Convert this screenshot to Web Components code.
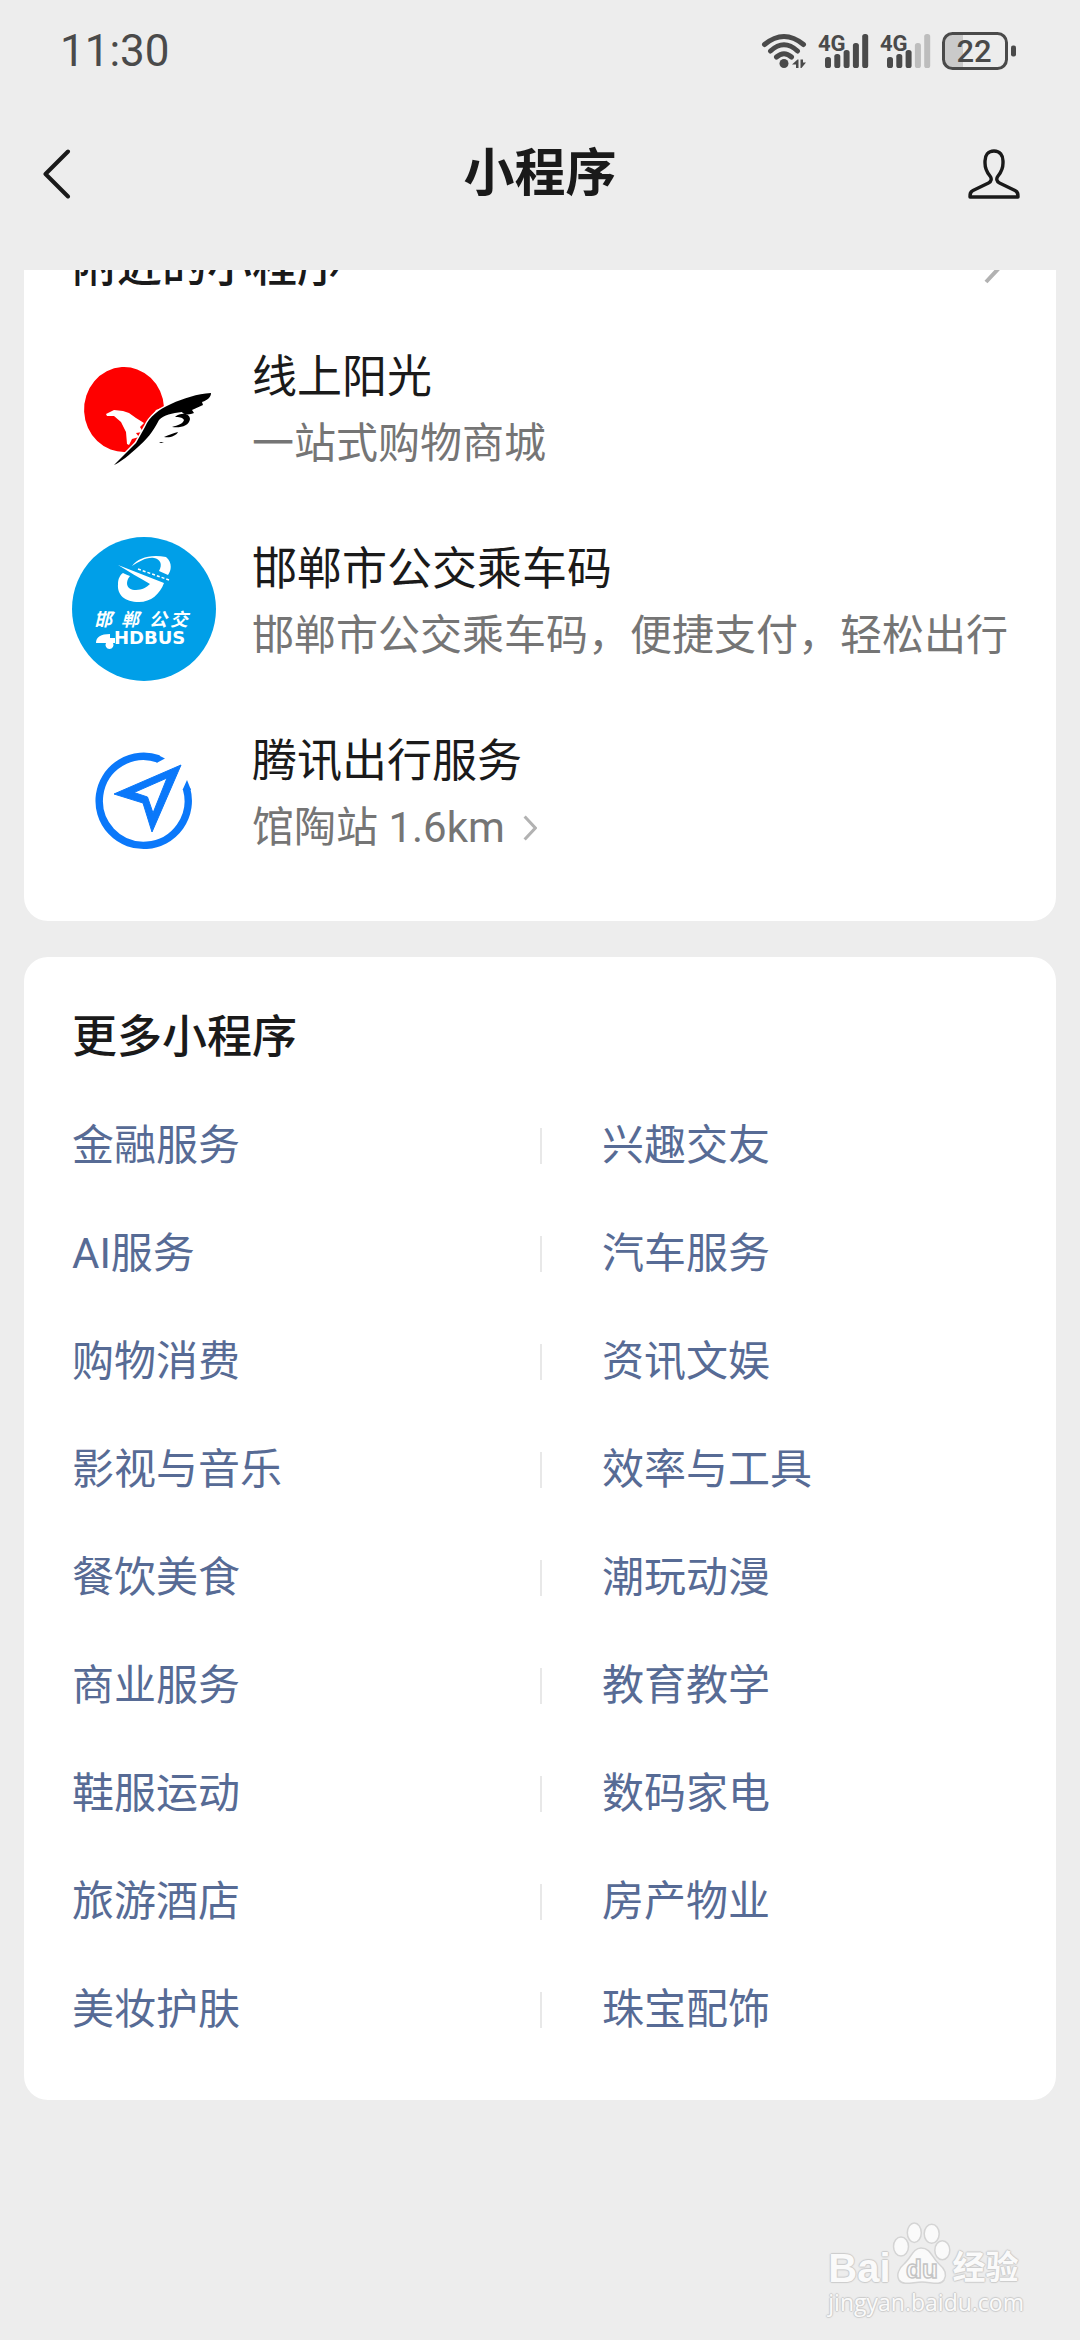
<!DOCTYPE html>
<html lang="zh-CN">
<head>
<meta charset="utf-8">
<meta name="viewport" content="width=device-width, initial-scale=1">
<title>小程序</title>
<style>
    body {
        margin: 0;
        background: #ededed;
        color: #1a1a1a;
        font-family: Roboto, "Noto Sans CJK SC", sans-serif;
    }
</style>
</head>
<body>
<mini-page>
    <status-bar slot="top"></status-bar>
    <nav-bar slot="top">小程序</nav-bar>

    <card-box class="nearby" arrow>
        <span slot="title">附近的小程序</span>
        <app-row logo="bird">线上阳光<span slot="desc">一站式购物商城</span></app-row>
        <app-row logo="bus">邯郸市公交乘车码<span slot="desc">邯郸市公交乘车码，便捷支付，轻松出行</span></app-row>
        <app-row logo="travel" arrow>腾讯出行服务<span slot="desc">馆陶站 1.6km</span></app-row>
    </card-box>

    <card-box>
        <span slot="title">更多小程序</span>
        <link-grid items="金融服务,兴趣交友,AI服务,汽车服务,购物消费,资讯文娱,影视与音乐,效率与工具,餐饮美食,潮玩动漫,商业服务,教育教学,鞋服运动,数码家电,旅游酒店,房产物业,美妆护肤,珠宝配饰"></link-grid>
    </card-box>

    <water-mark slot="overlay"></water-mark>
</mini-page>

<script>
// every element gets an open shadow root with its own markup
class BaseElement extends HTMLElement {
    constructor() {
        super()
        const template = document.createElement("template")
        template.innerHTML = this.render()
        const shadow = this.attachShadow({ mode: "open" })
        shadow.append(template.content.cloneNode(true))
    }
}

class MiniPage extends BaseElement {
    render() {
        return `
<style>
    :host {
        display: flex;
        flex-direction: column;
        position: relative;
        min-height: 100vh;
    }
    main {
        flex: 1;
        display: flex;
        flex-direction: column;
        gap: 36px;
        padding: 0 24px 36px;
        overflow: hidden;
    }
    /* the list is scrolled a little, so the first heading is cut off */
    ::slotted(.nearby) {
        margin-top: -84px;
    }
</style>
<header><slot name="top"></slot></header>
<main><slot></slot></main>
<slot name="overlay"></slot>`
    }
}
customElements.define("mini-page", MiniPage)


// 4G bars, the number says how many of the five are lit
function signal(lit) {
    const heights = [11, 14, 18, 25, 34]
    const bars = heights.map((h, i) =>
        `<rect x="${7 + i * 9.3}" y="${34 - h}" width="6" height="${h}" rx="2.6" fill="${i < lit ? "#4a4a4a" : "#bdbdbd"}"/>`
    ).join("")
    return `<svg width="50" height="34" viewBox="0 0 50 34">${bars}
        <text x="0" y="17" font-size="22" font-weight="700" fill="#4a4a4a">4G</text></svg>`
}

class StatusBar extends BaseElement {
    render() {
        return `
<style>
    :host {
        display: flex;
        align-items: center;
        justify-content: space-between;
        height: 102px;
        padding: 0 64px 0 60px;
        color: #4a4a4a;
    }
    time {
        font-size: 44px;
        line-height: 60px;
    }
    .icons {
        display: flex;
        align-items: center;
        gap: 12px;
    }
    svg {
        display: block;
        overflow: visible;
    }
</style>
<time>11:30</time>
<div class="icons">
    <svg width="44" height="34" viewBox="0 0 44 34" fill="none" stroke="#4a4a4a" stroke-width="5" stroke-linecap="round">
        <path d="M2.5 10.5Q22-5.5 41.5 10.5M8.5 17Q22 4.5 35.5 17M14.5 23Q22 16.5 29.5 23"/>
        <circle cx="22" cy="29.5" r="4.5" fill="#4a4a4a" stroke="none"/>
        <path d="M30 30.5L35.5 25.5H36.5V34H34V30.5ZM38.5 25.5H41V28.5H44L39.5 34H38.5Z" fill="#4a4a4a" stroke="none"/>
    </svg>
    ${signal(5)}
    ${signal(3)}
    <svg width="74" height="38" viewBox="0 0 74 38">
        <path d="M11 2H21V36H11A9 9 0 0 1 2 27V11A9 9 0 0 1 11 2Z" fill="#cacaca"/>
        <rect x="1.5" y="1.5" width="63" height="35" rx="9" fill="none" stroke="#4a4a4a" stroke-width="3"/>
        <rect x="69" y="13.5" width="5" height="11" rx="2" fill="#4a4a4a"/>
        <text x="32" y="30" font-size="31" font-weight="500" text-anchor="middle" fill="#4a4a4a">22</text>
    </svg>
</div>`
    }
}
customElements.define("status-bar", StatusBar)


class NavBar extends BaseElement {
    render() {
        return `
<style>
    :host {
        display: flex;
        align-items: flex-start;
        justify-content: space-between;
        height: 132px;
        padding: 36px 60px 0 42px;
    }
    h1 {
        margin: 0;
        font-size: 51px;
        line-height: 72px;
        font-weight: 700;
    }
    button {
        display: flex;
        align-items: center;
        width: 72px;
        height: 72px;
        padding: 0;
        border: 0;
        background: none;
    }
    .me {
        width: 54px;
        justify-content: flex-end;
    }
</style>
<button class="back" aria-label="返回">
    <svg width="30" height="50" viewBox="0 0 30 50" fill="none" stroke="#1a1a1a" stroke-width="4" stroke-linecap="round" stroke-linejoin="round"><path d="M26 2.5L3.5 25L26 47.5"/></svg>
</button>
<h1><slot></slot></h1>
<button class="me" aria-label="我的">
    <svg width="52" height="50" viewBox="0 0 52 50" fill="none" stroke="#1a1a1a" stroke-width="3.4" stroke-linejoin="round"><path d="M26 2C20 2 17 6.5 17 12V14C17 21 20 24.5 22 27C24 29.5 23.5 32.5 20.5 34L5 41.5C2 43 2 45 2 48H50C50 45 50 43 47 41.5L31.5 34C28.5 32.5 28 29.5 30 27C32 24.5 35 21 35 14V12C35 6.5 32 2 26 2Z"/></svg>
</button>`
    }
}
customElements.define("nav-bar", NavBar)


const chevron = `<svg class="chevron" viewBox="0 0 18 34" fill="none" stroke="#b2b2b2" stroke-width="4"><path d="M2 2L16 17L2 32"/></svg>`

class CardBox extends BaseElement {
    render() {
        return `
<style>
    :host {
        display: block;
        padding: 0 48px 24px;
        border-radius: 24px;
        background: #fff;
    }
    header {
        display: flex;
        align-items: center;
        justify-content: space-between;
        padding: 49px 0 23px;
    }
    h2 {
        margin: 0;
        font-size: 45px;
        line-height: 63px;
        font-weight: 500;
    }
    .chevron {
        display: none;
        width: 18px;
        height: 34px;
        margin-right: 6px;
    }
    :host([arrow]) .chevron {
        display: block;
    }
</style>
<header><h2><slot name="title"></slot></h2>${chevron}</header>
<slot></slot>`
    }
}
customElements.define("card-box", CardBox)


const logos = {
    bird: `
        <path d="M92 62A40 42.5 0 1 0 54 107L66 94L74 79L84 65Z" fill="#fe0000"/>
        <path d="M34 69L42 65L51 66L57 68L64 73L72 78L68 82L71 87L64 88L67 92L60 94L57 100L55 99L54 87L49 77L42 71L35 71Z" fill="#fff"/>
        <path d="M42 120L64 98L73 82C78 71 86 65 99 59C112 53 125 49 139 48C139 52 136 55 130 57L131 60L120 65L122 68C118 70 111 70 110 67C100 68 92 70 87 75C81 87 74 95 66 102C57 110 49 117 42 120Z" fill="#000" stroke="#fff" stroke-width="3" paint-order="stroke"/>
        <path d="M103 72C108 68 117 67 118 74C117 81 109 83 100 82C106 80 111 79 112 75C110 72 107 72 103 72ZM92 92C97 90 101 88 106 87C104 91 98 93 92 92ZM87 97H92L89 98Z" fill="#000"/>`,
    bus: `
        <circle cx="72" cy="72" r="72" fill="#009fe8"/>
        <g fill="#fff">
            <path d="M60 29C66 21 78 17 94 20C101 26 99 34 96 38L87 34C91 27 88 22 82 21C74 20 67 25 60 29Z"/>
            <path d="M46 28L92 46C88 57 79 65 67 65C53 65 45 58 46 47C46 42 48 38 51 36C53 37 55 38 58 39C53 45 54 53 64 53C70 53 75 50 78 47C68 41 57 35 46 28Z"/>
            <path d="M66 32L97 43" fill="none" stroke="#fff" stroke-width="1.5" stroke-dasharray="3 2"/>
            <text x="22 49 77 98" y="89" font-size="18" font-weight="700" font-style="italic">邯郸公交</text>
            <path d="M24 106C24 100 29 97 38 97V101H43V106H41A4 4 0 1 1 34 106Z"/>
            <text x="42" y="107" font-family="DejaVu Sans" font-size="18" font-weight="700">HDBUS</text>
        </g>`,
    travel: `
        <path d="M86.5 29.9A44.5 44.5 0 1 0 114.6 60" fill="none" stroke="#0a78fa" stroke-width="7.5"/>
        <path d="M86 26L93 29.5L84.5 34ZM115 51L110.5 61H119Z" fill="#0a78fa"/>
        <path fill-rule="evenodd" d="M109 36L80 103L71 74L42 65ZM95 49L62 63.5L75.5 68L81 84Z" fill="#0a78fa" stroke="#0a78fa" stroke-linejoin="round"/>`
}

class AppRow extends BaseElement {
    render() {
        return `
<style>
    :host {
        display: flex;
        align-items: flex-start;
        gap: 36px;
        padding: 24px 0;
    }
    .logo {
        flex: none;
        width: 144px;
        height: 144px;
    }
    .text {
        display: flex;
        flex-direction: column;
        gap: 6px;
        padding-top: 3px;
        line-height: 60px;
        white-space: nowrap;
    }
    .name {
        font-size: 45px;
    }
    .desc {
        display: flex;
        align-items: center;
        gap: 18px;
        font-size: 42px;
        color: #757575;
    }
    .chevron {
        display: none;
        width: 14px;
        height: 26px;
    }
    :host([arrow]) .chevron {
        display: block;
    }
</style>
<svg class="logo" viewBox="0 0 144 144">${logos[this.getAttribute("logo")]}</svg>
<div class="text">
    <div class="name"><slot></slot></div>
    <div class="desc"><slot name="desc"></slot>${chevron}</div>
</div>`
    }
}
customElements.define("app-row", AppRow)


// two columns of category links with a short line between them
class LinkGrid extends BaseElement {
    render() {
        const links = this.getAttribute("items").split(",").map(item => `<a href="#">${item}</a>`).join("")
        return `
<style>
    :host {
        display: grid;
        grid-template-columns: 1fr 1fr;
        padding-bottom: 12px;
    }
    a {
        display: flex;
        align-items: center;
        height: 108px;
        font-size: 42px;
        line-height: 60px;
        color: #576b95;
        text-decoration: none;
    }
    a:nth-of-type(even)::before {
        content: "";
        width: 2px;
        height: 36px;
        margin-right: 60px;
        background: #e8e8e8;
    }
</style>
${links}`
    }
}
customElements.define("link-grid", LinkGrid)


class WaterMark extends BaseElement {
    render() {
        return `
<style>
    :host {
        position: absolute;
        right: 56px;
        bottom: 26px;
        color: #fafafa;
        font-family: "Liberation Sans", "Noto Sans CJK SC", sans-serif;
        text-shadow: 1px 0 1px #ccc, -1px 0 1px #ccc, 0 1px 1px #ccc, 0 -1px 1px #ccc;
    }
    .brand {
        display: flex;
        align-items: flex-end;
        gap: 2px;
        font-weight: 700;
        line-height: 44px;
    }
    .bai {
        font-size: 40px;
    }
    .jy {
        font-size: 33px;
    }
    svg {
        display: block;
        margin-bottom: 6px;
        overflow: visible;
        text-shadow: none;
    }
    .site {
        font-family: "Open Sans", sans-serif;
        font-size: 23px;
        line-height: 24px;
    }
</style>
<div class="brand">
    <span class="bai">Bai</span>
    <svg width="58" height="62" viewBox="0 0 58 62" fill="#fafafa" stroke="#d4d4d4" stroke-width="1.5">
        <ellipse cx="8" cy="24.5" rx="7.5" ry="9.5"/>
        <ellipse cx="21.3" cy="10.7" rx="7" ry="9.7"/>
        <ellipse cx="38.7" cy="11.7" rx="7.5" ry="9.5"/>
        <ellipse cx="49.3" cy="28.3" rx="7.5" ry="9.5"/>
        <path d="M28 26C38 26 39 36 46 42C52 47 54 53 51 58C47 64 38 60 29 60C20 60 10 64 6 58C3 53 6 46 11 42C18 36 20 26 28 26Z"/>
        <text x="13" y="56" font-size="26" stroke="#c4c4c4">du</text>
    </svg>
    <span class="jy">经验</span>
</div>
<div class="site">jingyan.baidu.com</div>`
    }
}
customElements.define("water-mark", WaterMark)
</script>
</body>
</html>
